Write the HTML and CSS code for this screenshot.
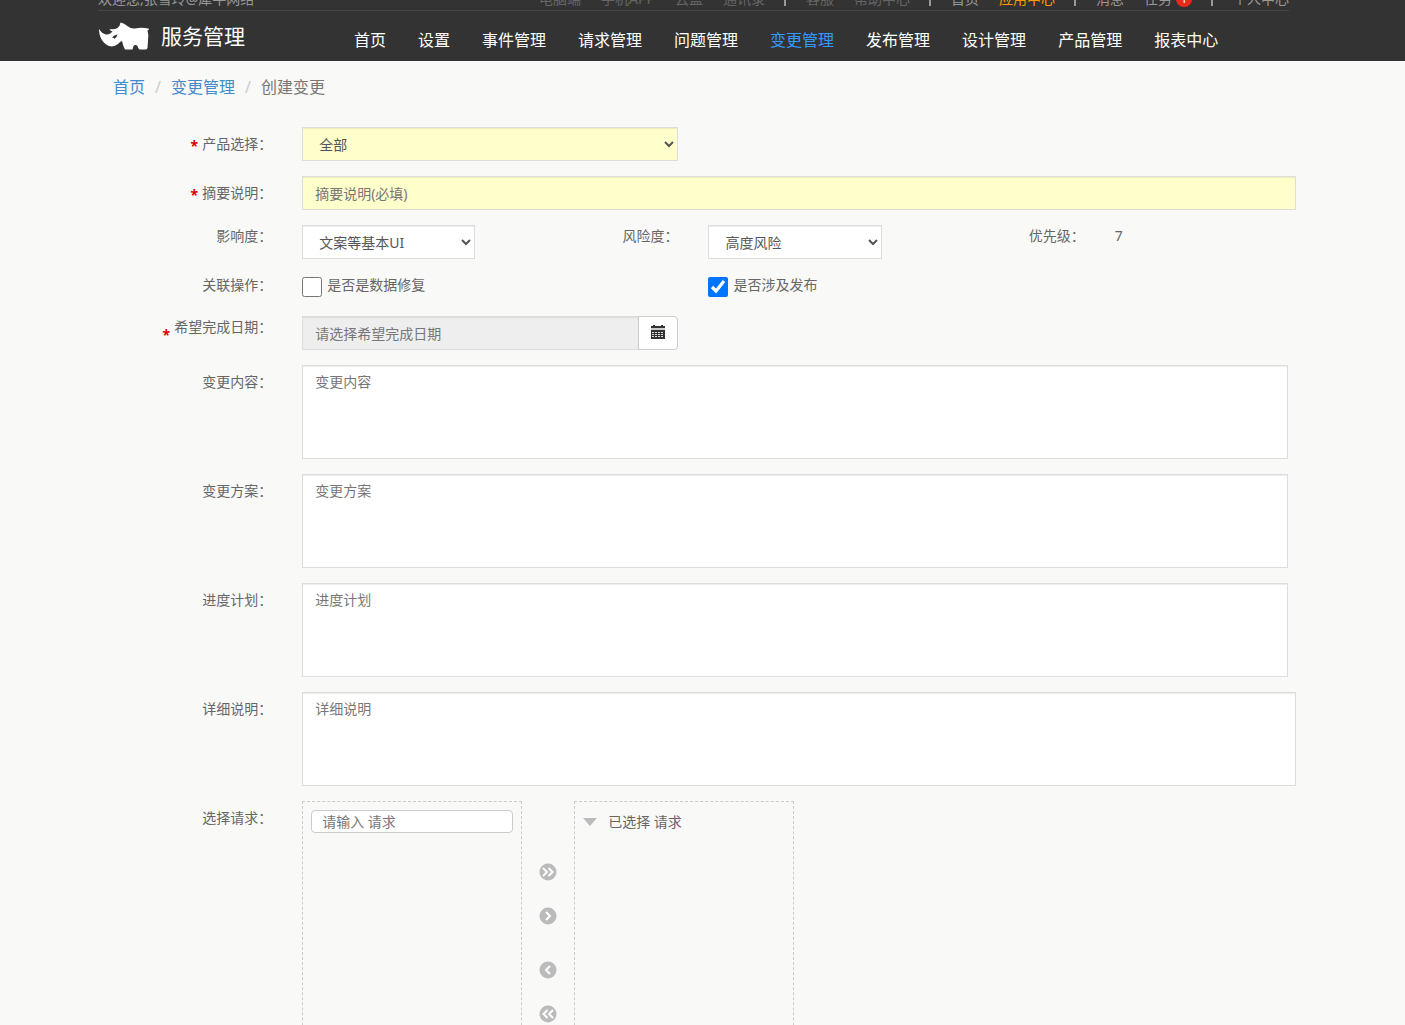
FILE: index.html
```html
<!DOCTYPE html>
<html lang="zh-CN">

<head>
    <meta charset="UTF-8">
    <meta name="viewport" content="width=device-width, initial-scale=1.0">
    <title>创建变更</title>
    <link rel="stylesheet" href="styles.css">
</head>

<body>

    <header class="header">
        <div class="container">
            <div class="topbar">
                <span class="welcome">欢迎您,张雪玲@犀牛网络</span>
                <ul class="top-links">
                    <li><a class="dim" href="#">电脑端</a></li>
                    <li><a class="dim" href="#">手机APP</a></li>
                    <li><a class="dim" href="#">云盘</a></li>
                    <li><a class="dim" href="#">通讯录</a></li>
                    <li class="sep"></li>
                    <li><a class="dim" href="#">客服</a></li>
                    <li><a class="dim" href="#">帮助中心</a></li>
                    <li class="sep"></li>
                    <li><a href="#">首页</a></li>
                    <li><a class="hot" href="#">应用中心</a></li>
                    <li class="sep"></li>
                    <li><a href="#">消息</a></li>
                    <li><a href="#">任务<span class="badge">1</span></a></li>
                    <li class="sep"></li>
                    <li><a href="#">个人中心</a></li>
                </ul>
            </div>
            <div class="navbar">
                <a class="brand" href="#">
                    <svg class="logo" width="52" height="28" viewBox="0 0 52 28" aria-hidden="true">
                        <path fill="#fff" d="M1 7C3 10 5 12 8 12.5C11 13 13 11 14.5 9.5Q12.500 9 11.500 7Q16 8 19.500 6Q22 4 22.500 0.500Q26 1 30 4.500Q33 7 37 6.500Q43 5 50.500 6.500L51 7.500L49.500 8.500Q51 13 50 19L49.500 26Q49 27.500 47 27.500L41.500 27.500Q40 27 39.500 24Q37.500 22 35.500 24L34.500 27.500L27 27.500Q25 24 24 19Q22 19.500 20 22Q16 25.500 11 24C4 21 1 14 1 7Z"/>
                        <path fill="#333" d="M14 15.500Q16 13 19.500 12.500Q19 15 16.500 17Q16.500 15.500 14 15.500Z"/>
                    </svg>
                    <span>服务管理</span>
                </a>
                <nav class="nav">
                    <a href="#">首页</a>
                    <a href="#">设置</a>
                    <a href="#">事件管理</a>
                    <a href="#">请求管理</a>
                    <a href="#">问题管理</a>
                    <a class="active" href="#">变更管理</a>
                    <a href="#">发布管理</a>
                    <a href="#">设计管理</a>
                    <a href="#">产品管理</a>
                    <a href="#">报表中心</a>
                </nav>
            </div>
        </div>
    </header>

    <main class="main">
        <div class="container">
            <ol class="breadcrumb">
                <li><a href="#">首页</a></li>
                <li class="slash">/</li>
                <li><a href="#">变更管理</a></li>
                <li class="slash">/</li>
                <li>创建变更</li>
            </ol>
        </div>

        <form class="form">
            <div class="row">
                <label class="col-2 label" for="product"><span class="star">*</span>产品选择<span class="colon">：</span></label>
                <div class="col-4">
                    <select class="control required" id="product">
                        <option>全部</option>
                    </select>
                </div>
            </div>

            <div class="row">
                <label class="col-2 label" for="summary"><span class="star">*</span>摘要说明<span class="colon">：</span></label>
                <div class="col-10 wide">
                    <input class="control required" type="text" id="summary" placeholder="摘要说明(必填)">
                </div>
            </div>

            <div class="row">
                <label class="col-2 label top" for="impact">影响度<span class="colon">：</span></label>
                <div class="col-2">
                    <select class="control" id="impact">
                        <option>文案等基本UI</option>
                    </select>
                </div>
                <label class="col-2 label top" for="risk">风险度<span class="colon">：</span></label>
                <div class="col-2">
                    <select class="control" id="risk">
                        <option>高度风险</option>
                    </select>
                </div>
                <span class="col-2 label top">优先级<span class="colon">：</span></span>
                <div class="col-2 value">7</div>
            </div>

            <div class="row checks">
                <span class="col-2 label top">关联操作<span class="colon">：</span></span>
                <div class="col-4 check">
                    <input type="checkbox" id="repair">
                    <label for="repair">是否是数据修复</label>
                </div>
                <div class="col-4 check">
                    <input type="checkbox" id="release" checked>
                    <label for="release">是否涉及发布</label>
                </div>
            </div>

            <div class="row">
                <label class="col-2 label top" for="date"><span class="star low">*</span>希望完成日期<span class="colon">：</span></label>
                <div class="col-4 date">
                    <input class="control" type="text" id="date" placeholder="请选择希望完成日期" readonly>
                    <button type="button" class="date-btn" aria-label="日期">
                        <svg width="14" height="14" viewBox="0 0 14 14">
                            <path fill="#333" d="M2 0H4V1H10V0H12V1H14V3H0V1H2Z"/>
                            <path fill="#ccc" d="M0 3H14V5H0Z"/>
                            <path fill="#333" d="M0 5H14V14H0Z"/>
                            <path stroke="#ddd" stroke-width="1" stroke-dasharray="2 1" d="M1 7.5H13M1 9.5H13M1 11.5H13"/>
                        </svg>
                    </button>
                </div>
            </div>

            <div class="row">
                <label class="col-2 label" for="content">变更内容<span class="colon">：</span></label>
                <div class="col-10">
                    <textarea class="control" id="content" placeholder="变更内容"></textarea>
                </div>
            </div>

            <div class="row">
                <label class="col-2 label" for="plan">变更方案<span class="colon">：</span></label>
                <div class="col-10">
                    <textarea class="control" id="plan" placeholder="变更方案"></textarea>
                </div>
            </div>

            <div class="row">
                <label class="col-2 label" for="schedule">进度计划<span class="colon">：</span></label>
                <div class="col-10">
                    <textarea class="control" id="schedule" placeholder="进度计划"></textarea>
                </div>
            </div>

            <div class="row">
                <label class="col-2 label" for="detail">详细说明<span class="colon">：</span></label>
                <div class="col-10 wide">
                    <textarea class="control" id="detail" placeholder="详细说明"></textarea>
                </div>
            </div>

            <div class="row">
                <label class="col-2 label" for="request">选择请求<span class="colon">：</span></label>
                <div class="col-10 transfer">
                    <div class="box">
                        <input class="search" type="text" id="request" placeholder="请输入 请求">
                    </div>
                    <div class="arrows">
                        <button type="button" aria-label="全部添加">
                            <svg width="18" height="18" viewBox="0 0 18 18"><circle cx="9" cy="9" r="8.5"/><path d="M4 5L8 9L4 13M9.5 5L13.5 9L9.5 13"/></svg>
                        </button>
                        <button type="button" aria-label="添加">
                            <svg width="18" height="18" viewBox="0 0 18 18"><circle cx="9" cy="9" r="8.5"/><path d="M7 5L11 9L7 13"/></svg>
                        </button>
                        <button type="button" class="back" aria-label="移除">
                            <svg width="18" height="18" viewBox="0 0 18 18"><circle cx="9" cy="9" r="8.5"/><path d="M11 5L7 9L11 13"/></svg>
                        </button>
                        <button type="button" aria-label="全部移除">
                            <svg width="18" height="18" viewBox="0 0 18 18"><circle cx="9" cy="9" r="8.5"/><path d="M8.5 5L4.5 9L8.500 13M14 5L10 9L14 13"/></svg>
                        </button>
                    </div>
                    <div class="box">
                        <div class="selected"><span class="caret"></span>已选择 请求</div>
                    </div>
                </div>
            </div>
        </form>
    </main>

</body>

</html>
```
FILE: styles.css
```css
* {
    box-sizing: border-box;
}

body {
    margin: 0;
    height: 100vh;
    overflow-y: auto;
    scrollbar-width: none;
    background-color: #f9f9f8;
    color: #666;
    font-family: "Noto Sans", "Noto Sans CJK SC", sans-serif;
    font-size: 14px;
    line-height: 20px;
}

a {
    color: #428bca;
    text-decoration: none;
}

ul, ol {
    list-style: none;
    margin: 0;
    padding: 0;
}

.header, .main {
    padding-right: 18px;
}

.container {
    max-width: 1219px;
    margin: 0 auto;
    padding: 0 14px;
}

.header {
    background-color: #333;
}

/* top bar, mostly scrolled away */
.topbar {
    display: flex;
    justify-content: space-between;
    align-items: flex-end;
    height: 11px;
    overflow: hidden;
    border-bottom: 1px solid #444;
    color: #999;
    line-height: 22px;
    white-space: nowrap;
}

.top-links {
    display: flex;
    gap: 20px;
}

.top-links a {
    display: flex;
    align-items: center;
    color: #999;
}

.top-links a.dim {
    color: #666;
}

.top-links a.hot {
    color: #f90;
}

.top-links .sep {
    width: 2px;
    height: 18px;
    margin-left: -1px;
    background-color: #999;
}

.badge {
    width: 16px;
    height: 16px;
    margin-left: 4px;
    border-radius: 8px;
    background-color: #e82a1c;
    color: #fff;
    font-size: 12px;
    line-height: 16px;
    text-align: center;
}

.navbar {
    display: flex;
    align-items: center;
    height: 50px;
}

.brand {
    display: flex;
    align-items: center;
    gap: 11px;
    width: 256px;
    color: #fff;
    font-size: 21px;
    line-height: 28px;
}

.nav {
    display: flex;
    gap: 32px;
    padding-top: 8px;
    font-size: 16px;
    line-height: 24px;
    white-space: nowrap;
}

.nav a {
    color: #fff;
}

.nav a.active {
    color: #3399ff;
}

.breadcrumb {
    display: flex;
    gap: 10px;
    padding: 14px 15px 28px;
    color: #777;
    font-size: 16px;
    line-height: 24px;
}

.breadcrumb .slash {
    color: #ccc;
}

/* form grid */
.form {
    max-width: 1219px;
    margin: 0 auto;
}

.row {
    display: flex;
    align-items: flex-start;
    margin-bottom: 15px;
}

.col-2, .col-4, .col-10 {
    padding: 0 15px;
}

.col-2 {
    width: 16.6667%;
}

.col-4 {
    width: 33.3333%;
}

.col-10 {
    width: 83.3333%;
}

.wide {
    padding-right: 7px;
}

.label {
    padding-top: 7px;
    text-align: right;
}

.label.top, .value {
    padding-top: 1px;
}

/* centred colon */
.colon {
    font-family: "Noto Sans CJK TC", sans-serif;
    line-height: 1;
}

.star {
    margin-right: 4px;
    color: #d00;
    font-weight: bold;
    line-height: 0;
    vertical-align: -2px;
}

.star.low {
    vertical-align: -8px;
}

.control {
    display: block;
    width: 100%;
    height: 34px;
    margin: 0;
    padding: 6px 12px;
    border: 1px solid #ddd;
    border-radius: 0;
    background-color: #fff;
    box-shadow: inset 0 1px 1px rgba(0, 0, 0, 0.075);
    color: #555;
    font: inherit;
}

.control::placeholder, .search::placeholder {
    color: #777;
}

.control.required {
    background-color: #ffffcc;
}

textarea.control {
    height: 94px;
    resize: none;
}

.checks {
    min-height: 27px;
}

.check {
    display: flex;
    align-items: flex-start;
    gap: 5px;
}

.check input {
    width: 20px;
    height: 20px;
    margin: 3px 0 0;
}

.check label {
    padding-top: 1px;
}

.date {
    display: flex;
}

.date .control {
    flex: 1;
    min-width: 0;
    background-color: #eee;
}

.date-btn {
    width: 40px;
    height: 34px;
    margin-left: -1px;
    padding: 0;
    border: 1px solid #ccc;
    border-radius: 0 4px 4px 0;
    background-color: #fff;
}

/* request picker */
.transfer {
    display: flex;
}

.box {
    width: 220px;
    height: 300px;
    padding: 8px;
    border: 1px dashed #ccc;
}

.search {
    display: block;
    width: 100%;
    height: 23px;
    padding: 0 10px;
    border: 1px solid #ccc;
    border-radius: 4px;
    background-color: #fff;
    color: #555;
    font: inherit;
}

.arrows {
    display: flex;
    flex-direction: column;
    align-items: center;
    gap: 26px;
    width: 52px;
    padding-top: 62px;
}

.arrows button {
    height: 18px;
    padding: 0;
    border: 0;
    background: none;
}

.arrows .back {
    margin-top: 10px;
}

.arrows svg {
    display: block;
    fill: #bbb;
}

.arrows path {
    fill: none;
    stroke: #fff;
    stroke-width: 2;
}

.selected {
    display: flex;
    align-items: center;
    gap: 11px;
    padding-top: 2px;
}

.caret {
    border: 7px solid transparent;
    border-top: 8px solid #bbb;
    border-bottom: 0;
}
```
